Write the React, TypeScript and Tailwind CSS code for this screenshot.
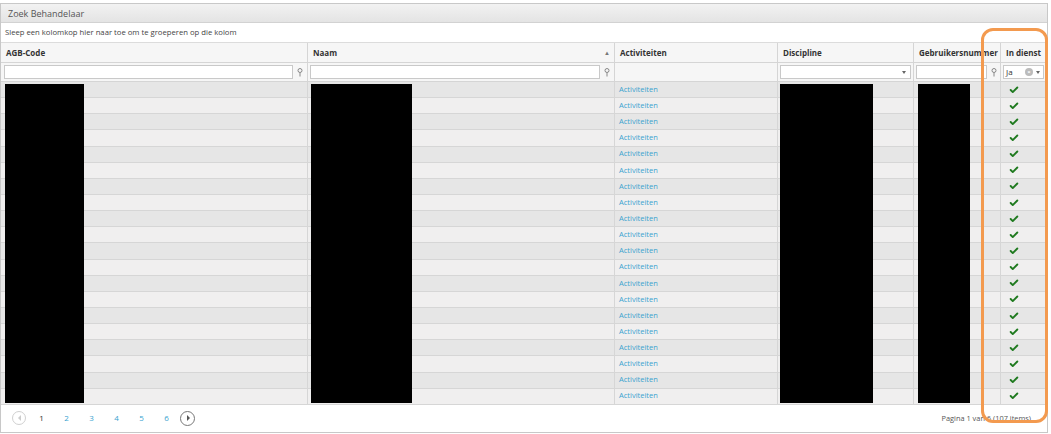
import { Check } from 'lucide-react';

const cols = 'grid grid-cols-[307px_307px_163px_136px_87px_45px]';
const rowCount = 20;

function FilterIcon() {
  return (
    <svg width="6" height="9" viewBox="0 0 6 9" className="text-[#888]">
      <circle cx="3" cy="2.5" r="2" fill="none" stroke="currentColor" strokeWidth="1" />
      <line x1="3" y1="4.5" x2="3" y2="8.5" stroke="currentColor" strokeWidth="1" />
    </svg>
  );
}

function Caret() {
  return <span className="h-0 w-0 border-x-[2.5px] border-t-[3px] border-x-transparent border-t-[#666]" />;
}

function HeaderCell({ label, sort, last }: { label: string; sort?: boolean; last?: boolean }) {
  return (
    <div
      className={`flex items-center justify-between overflow-hidden whitespace-nowrap pl-[5px] pr-[4px] ${
        last ? '' : 'border-r border-[#d5d5d5]'
      }`}
    >
      <span className="text-[8px] font-bold text-[#333]">{label}</span>
      {sort && <span className="text-[6px] text-[#777]">▲</span>}
    </div>
  );
}

export default function App() {
  const rows = Array.from({ length: rowCount }, (_, i) => i);

  return (
    <div className="relative h-[434px] w-[1051px] overflow-hidden bg-white pt-[3px] text-[9px] leading-none text-[#333] [font-family:'Open_Sans',sans-serif]">
      <div className="w-[1048px] border border-[#c8c8c8]">
        {/* title bar */}
        <div className="flex h-[19px] items-center border-b border-[#d2d2d2] bg-gradient-to-b from-[#f2f2f2] to-[#e4e4e4] px-[7px] text-[9px] text-[#555]">
          Zoek Behandelaar
        </div>

        {/* group area */}
        <div className="flex h-[20px] items-center border-b border-[#dcdcdc] px-[4px] text-[7.7px] text-[#444]">
          Sleep een kolomkop hier naar toe om te groeperen op die kolom
        </div>

        {/* header */}
        <div className={`${cols} h-[20px] border-b border-[#d5d5d5] bg-[#f6f6f6]`}>
          <HeaderCell label="AGB-Code" />
          <HeaderCell label="Naam" sort />
          <HeaderCell label="Activiteiten" />
          <HeaderCell label="Discipline" />
          <HeaderCell label="Gebruikersnummer" />
          <HeaderCell label="In dienst" last />
        </div>

        {/* filter row */}
        <div className={`${cols} h-[19px] border-b border-[#d5d5d5] bg-[#f6f6f6]`}>
          <div className="flex items-center gap-[4px] border-r border-[#d5d5d5] pl-[3px] pr-[4px]">
            <div className="h-[14px] flex-1 border border-[#c9c9c9] bg-white" />
            <FilterIcon />
          </div>
          <div className="flex items-center gap-[4px] border-r border-[#d5d5d5] pl-[2px] pr-[4px]">
            <div className="h-[14px] flex-1 border border-[#c9c9c9] bg-white" />
            <FilterIcon />
          </div>
          <div className="border-r border-[#d5d5d5]" />
          <div className="flex items-center border-r border-[#d5d5d5] px-[2px]">
            <div className="flex h-[14px] flex-1 items-center justify-end border border-[#c9c9c9] bg-white pr-[4px]">
              <Caret />
            </div>
          </div>
          <div className="flex items-center gap-[4px] border-r border-[#d5d5d5] pl-[2px] pr-[3px]">
            <div className="h-[14px] flex-1 border border-[#c9c9c9] bg-white" />
            <FilterIcon />
          </div>
          <div className="flex items-center px-[2px]">
            <div className="flex h-[14px] flex-1 items-center border border-[#c9c9c9] bg-white pl-[2px] pr-[3px] text-[8px]">
              <span className="flex-1">Ja</span>
              <span className="mr-[3px] flex h-[8px] w-[8px] items-center justify-center rounded-full bg-[#bbb] text-[6px] font-bold text-white">
                ×
              </span>
              <Caret />
            </div>
          </div>
        </div>

        {/* body */}
        <div className="relative">
          {rows.map((i) => (
            <div
              key={i}
              className={`${cols} h-[16.15px] border-b border-[#d6d6d6] ${i % 2 === 0 ? 'bg-[#e6e6e6]' : 'bg-[#f0efef]'}`}
            >
              <div className="border-r border-[#d6d6d6]" />
              <div className="border-r border-[#d6d6d6]" />
              <div className="flex items-center border-r border-[#d6d6d6] px-[4px] text-[7.5px] text-[#3aa3cf]">
                Activiteiten
              </div>
              <div className="border-r border-[#d6d6d6]" />
              <div className="border-r border-[#d6d6d6]" />
              <div className="flex items-center pl-[8px]">
                <Check size={10} strokeWidth={4.5} className="text-[#1f7a1f]" />
              </div>
            </div>
          ))}

          {/* redacted blocks */}
          <div className="absolute left-[4px] top-[2px] h-[319px] w-[79px] bg-black" />
          <div className="absolute left-[310px] top-[2px] h-[319px] w-[101px] bg-black" />
          <div className="absolute left-[779px] top-[2px] h-[319px] w-[93px] bg-black" />
          <div className="absolute left-[917px] top-[2px] h-[319px] w-[52px] bg-black" />
        </div>

        {/* pager */}
        <div className="flex h-[27px] items-center px-[11px]">
          <span className="flex h-[14px] w-[14px] items-center justify-center rounded-full border border-[#d0d0d0]">
            <span className="h-0 w-0 border-y-[3px] border-r-[3px] border-y-transparent border-r-[#ccc]" />
          </span>
          <span className="ml-[3px] flex items-center text-[8px]">
            <span className="w-[25px] text-center text-[#333]">1</span>
            {[2, 3, 4, 5, 6].map((p) => (
              <span key={p} className="w-[25px] text-center text-[#3aa3cf]">
                {p}
              </span>
            ))}
          </span>
          <span className="ml-[1px] flex h-[15px] w-[15px] items-center justify-center rounded-full border border-[#777]">
            <span className="ml-[1px] h-0 w-0 border-y-[3px] border-l-[3.5px] border-y-transparent border-l-[#555]" />
          </span>
          <span className="ml-auto mr-[5px] text-[7.4px] text-[#555]">Pagina 1 van 6 (107 items)</span>
        </div>
      </div>

      {/* orange highlight */}
      <div className="pointer-events-none absolute left-[981px] top-[28px] h-[395px] w-[67px] rounded-[12px] border-[3px] border-[#f39a4f]" />
    </div>
  );
}
